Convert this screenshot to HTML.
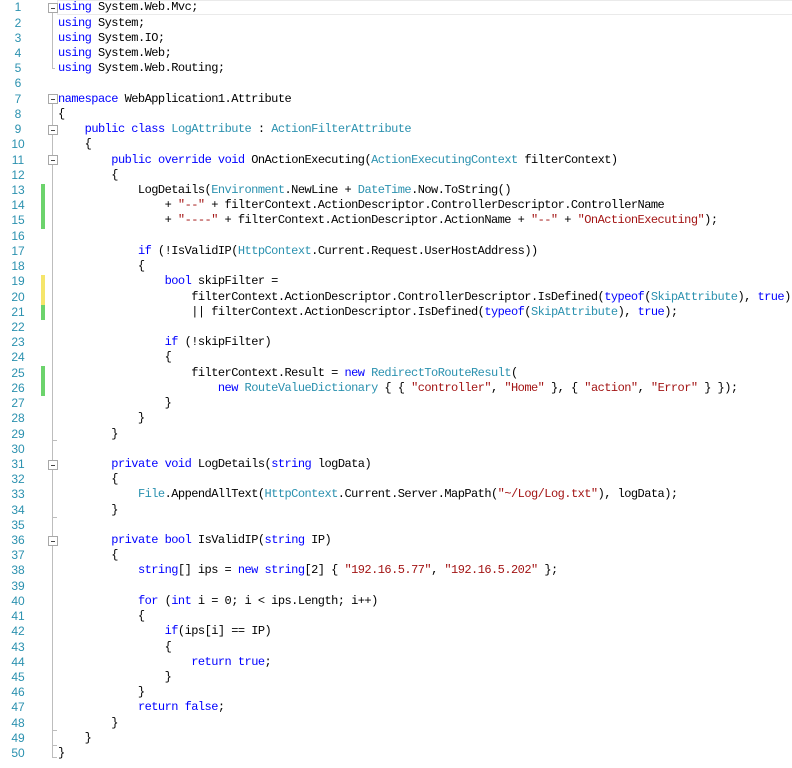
<!DOCTYPE html>
<html><head><meta charset="utf-8"><style>
html,body{margin:0;padding:0;background:#fff;width:792px;height:768px;overflow:hidden;position:relative}
.ln{position:absolute;left:0;top:0.4px;width:36px;text-align:center;font:12px/15.22px "Liberation Sans",sans-serif;color:#2B91AF;white-space:pre}
.code{position:absolute;left:58px;top:0.4px;font:12px/15.22px "Liberation Mono",monospace;letter-spacing:-0.54px;color:#000;white-space:pre}
.k{color:#0000FF}.t{color:#2B91AF}.s{color:#A31515}
.bar{position:absolute;left:41px;width:4px}
.g{background:#6CD36C}.y{background:#F5E56B}
.vl{position:absolute;left:52px;width:1px;background:#BDBDBD}
.tk{position:absolute;left:52px;width:5px;height:1px;background:#BDBDBD}
.fb{position:absolute;left:48px;width:8px;height:8px;border:1px solid #A8A8A8;background:#fff}
.fb:after{content:"";position:absolute;left:2px;top:3.5px;width:4px;height:1px;background:#444}
.cur{position:absolute;left:57px;top:0px;width:740px;height:15px;border:1px solid #EAEAEA;box-sizing:border-box}
</style></head><body>
<div class="cur"></div>
<div class="ln">1
2
3
4
5
6
7
8
9
10
11
12
13
14
15
16
17
18
19
20
21
22
23
24
25
26
27
28
29
30
31
32
33
34
35
36
37
38
39
40
41
42
43
44
45
46
47
48
49
50</div>
<div class="bar g" style="top:184px;height:45px"></div>
<div class="bar y" style="top:275px;height:30px"></div>
<div class="bar g" style="top:305px;height:15px"></div>
<div class="bar g" style="top:366px;height:30px"></div>
<div class="vl" style="top:8px;height:60px"></div>
<div class="tk" style="top:68px;width:3px"></div>
<div class="vl" style="top:99px;height:658px"></div>
<div class="tk" style="top:440px"></div>
<div class="tk" style="top:517px"></div>
<div class="tk" style="top:730px"></div>
<div class="tk" style="top:745px"></div>
<div class="tk" style="top:757px"></div>
<div class="fb" style="top:3px"></div>
<div class="fb" style="top:94px"></div>
<div class="fb" style="top:125px"></div>
<div class="fb" style="top:155px"></div>
<div class="fb" style="top:460px"></div>
<div class="fb" style="top:536px"></div>
<div class="code"><span class="k">using</span> System.Web.Mvc;
<span class="k">using</span> System;
<span class="k">using</span> System.IO;
<span class="k">using</span> System.Web;
<span class="k">using</span> System.Web.Routing;

<span class="k">namespace</span> WebApplication1.Attribute
{
    <span class="k">public</span> <span class="k">class</span> <span class="t">LogAttribute</span> : <span class="t">ActionFilterAttribute</span>
    {
        <span class="k">public</span> <span class="k">override</span> <span class="k">void</span> OnActionExecuting(<span class="t">ActionExecutingContext</span> filterContext)
        {
            LogDetails(<span class="t">Environment</span>.NewLine + <span class="t">DateTime</span>.Now.ToString()
                + <span class="s">"--"</span> + filterContext.ActionDescriptor.ControllerDescriptor.ControllerName
                + <span class="s">"----"</span> + filterContext.ActionDescriptor.ActionName + <span class="s">"--"</span> + <span class="s">"OnActionExecuting"</span>);

            <span class="k">if</span> (!IsValidIP(<span class="t">HttpContext</span>.Current.Request.UserHostAddress))
            {
                <span class="k">bool</span> skipFilter =
                    filterContext.ActionDescriptor.ControllerDescriptor.IsDefined(<span class="k">typeof</span>(<span class="t">SkipAttribute</span>), <span class="k">true</span>)
                    || filterContext.ActionDescriptor.IsDefined(<span class="k">typeof</span>(<span class="t">SkipAttribute</span>), <span class="k">true</span>);

                <span class="k">if</span> (!skipFilter)
                {
                    filterContext.Result = <span class="k">new</span> <span class="t">RedirectToRouteResult</span>(
                        <span class="k">new</span> <span class="t">RouteValueDictionary</span> { { <span class="s">"controller"</span>, <span class="s">"Home"</span> }, { <span class="s">"action"</span>, <span class="s">"Error"</span> } });
                }
            }
        }

        <span class="k">private</span> <span class="k">void</span> LogDetails(<span class="k">string</span> logData)
        {
            <span class="t">File</span>.AppendAllText(<span class="t">HttpContext</span>.Current.Server.MapPath(<span class="s">"~/Log/Log.txt"</span>), logData);
        }

        <span class="k">private</span> <span class="k">bool</span> IsValidIP(<span class="k">string</span> IP)
        {
            <span class="k">string</span>[] ips = <span class="k">new</span> <span class="k">string</span>[2] { <span class="s">"192.16.5.77"</span>, <span class="s">"192.16.5.202"</span> };

            <span class="k">for</span> (<span class="k">int</span> i = 0; i &lt; ips.Length; i++)
            {
                <span class="k">if</span>(ips[i] == IP)
                {
                    <span class="k">return</span> <span class="k">true</span>;
                }
            }
            <span class="k">return</span> <span class="k">false</span>;
        }
    }
}</div>
</body></html>
